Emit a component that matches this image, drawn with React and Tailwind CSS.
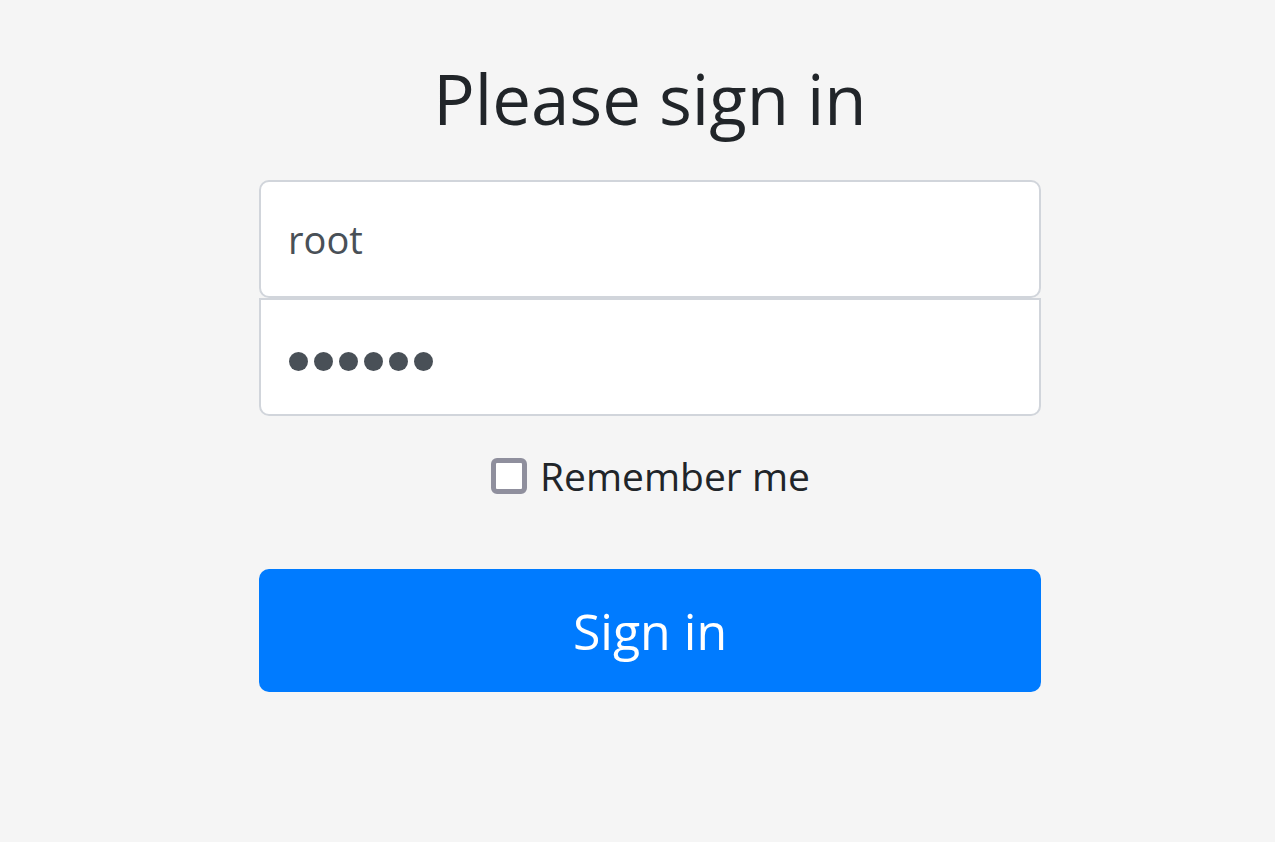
export default function App() {
  return (
    <div
      className="min-h-[842px] w-full bg-[#f5f5f5] text-[#212529]"
      style={{ fontFamily: '"Open Sans", "Noto Sans", sans-serif' }}
    >
      <form className="ml-[259px] w-[782px] pt-[52px]">
        <h1 className="mb-[36px] text-center text-[69px] leading-[92px] font-normal">Please sign in</h1>

        <div className="flex h-[118px] items-center rounded-[10px] border-2 border-[#d1d5db] bg-white px-[27px] text-[38px] text-[#495057]">
          root
        </div>
        <div className="flex h-[118px] items-center rounded-b-[10px] border-2 border-[#d1d5db] bg-white px-[28px] pt-[8px] text-[#495057]">
          <div className="flex gap-[6px]">
            {[0, 1, 2, 3, 4, 5].map((i) => (
              <span key={i} className="block h-[19px] w-[19px] rounded-full bg-[#495057]" />
            ))}
          </div>
        </div>

        <div className="mt-[35px] flex items-center justify-center gap-[13px] pl-[1px]">
          <span className="block h-[36px] w-[36px] rounded-[6px] border-[5px] border-[#8f8f9d] bg-white" />
          <span className="text-[39px] leading-[50px]">Remember me</span>
        </div>

        <button
          type="button"
          className="mt-[68px] flex h-[123px] w-full items-center justify-center rounded-[10px] bg-[#007bff] pt-[2px] text-[50px] text-white"
        >
          Sign in
        </button>
      </form>
    </div>
  );
}
